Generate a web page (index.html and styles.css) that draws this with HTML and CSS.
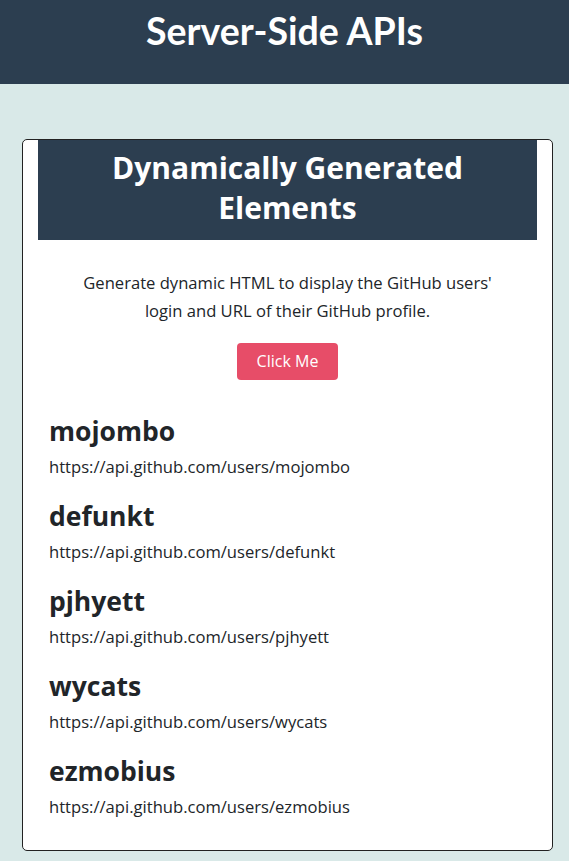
FILE: index.html
```html
<!DOCTYPE html>
<html lang="en">
<head>
<meta charset="utf-8">
<title>Server-Side APIs</title>
<link rel="stylesheet" href="styles.css">
</head>
<body>
<header class="site-header">
  <h1 class="site-title">Server-Side APIs</h1>
</header>
<main class="main">
  <section class="card">
    <div class="card-header">
      <h2 class="card-title">Dynamically Generated Elements</h2>
    </div>
    <p class="intro">Generate dynamic HTML to display the GitHub users' login and URL of their GitHub profile.</p>
    <div class="actions">
      <button class="btn" type="button">Click Me</button>
    </div>
    <div class="users">
      <div class="user">
        <h3 class="user-login">mojombo</h3>
        <p class="user-url">https://api.github.com/users/mojombo</p>
      </div>
      <div class="user">
        <h3 class="user-login">defunkt</h3>
        <p class="user-url">https://api.github.com/users/defunkt</p>
      </div>
      <div class="user">
        <h3 class="user-login">pjhyett</h3>
        <p class="user-url">https://api.github.com/users/pjhyett</p>
      </div>
      <div class="user">
        <h3 class="user-login">wycats</h3>
        <p class="user-url">https://api.github.com/users/wycats</p>
      </div>
      <div class="user">
        <h3 class="user-login">ezmobius</h3>
        <p class="user-url">https://api.github.com/users/ezmobius</p>
      </div>
    </div>
  </section>
</main>
</body>
</html>
```
FILE: styles.css
```css
* { box-sizing: border-box; }
html, body { margin: 0; padding: 0; }
body {
  font-family: "Open Sans", "Noto Sans", sans-serif;
  background: #d9e9e8;
  color: #212529;
  font-size: 16.6px;
}
.site-header {
  background: #2c3e50;
  height: 84px;
  display: flex;
  justify-content: center;
  padding-top: 8px;
}
.site-title {
  margin: 0;
  color: #fff;
  font-family: "Lato", "Open Sans", sans-serif;
  font-size: 37.5px;
  font-weight: 700;
  line-height: 45px;
}
.main {
  padding: 55px 16px 10px 22px;
}
.card {
  background: #fff;
  border: 1px solid #222;
  border-radius: 5px;
  padding: 0 15px 12px;
}
.card-header {
  background: #2c3e50;
  padding: 8px 10px 12px;
}
.card-title {
  margin: 0;
  color: #fff;
  text-align: center;
  font-size: 30px;
  font-weight: 700;
  line-height: 40px;
}
.intro {
  max-width: 440px;
  margin: 29px auto 0;
  text-align: center;
  line-height: 28px;
}
.actions {
  display: flex;
  justify-content: center;
  margin-top: 18px;
}
.btn {
  background: #e74d68;
  color: #fff;
  border: 0;
  border-radius: 4px;
  font-family: inherit;
  font-size: 16px;
  line-height: 24px;
  padding: 6px 20px 7px;
}
.users {
  padding: 33px 11px 0;
}
.user-login {
  margin: 0;
  font-size: 26.5px;
  font-weight: 700;
  line-height: 36px;
}
.user-url {
  margin: 6px 0 19px;
  line-height: 24px;
}
```
